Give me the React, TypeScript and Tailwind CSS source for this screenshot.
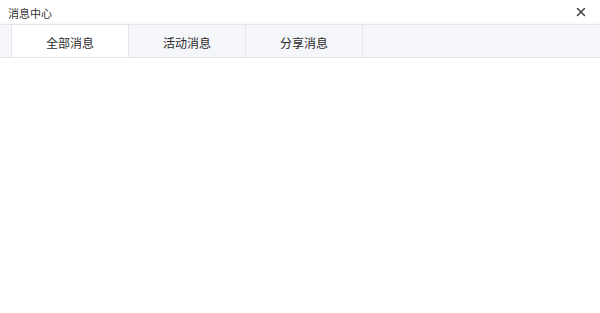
import { X } from "lucide-react";

const tabs = ["全部消息", "活动消息", "分享消息"];

const App = () => {
  return (
    <div
      className="w-[600px] h-[313px] bg-white overflow-hidden"
      style={{ fontFamily: '"Noto Sans CJK SC", "Liberation Sans", sans-serif' }}
    >
      <div className="h-[24px] flex items-center justify-between pl-[8px] pr-[12px]">
        <span className="text-[11px] text-[#333] leading-none pt-[2px]">消息中心</span>
        <X size={14} strokeWidth={2.6} className="text-[#444]" />
      </div>
      <div className="flex h-[34px] bg-[#f5f6fa] border-t border-b border-[#e3e5ea] shadow-[0_-1px_2px_rgba(0,0,0,0.04)]">
        <div className="w-[12px] border-r border-[#e3e5ea]" />
        {tabs.map((t, i) => (
          <div
            key={t}
            className={`w-[117px] flex items-center justify-center pt-[3px] border-r border-[#e3e5ea] text-[12px] text-[#2b2b2b] ${
              i === 0 ? "bg-white" : ""
            }`}
          >
            {t}
          </div>
        ))}
      </div>
    </div>
  );
};

export default App;
